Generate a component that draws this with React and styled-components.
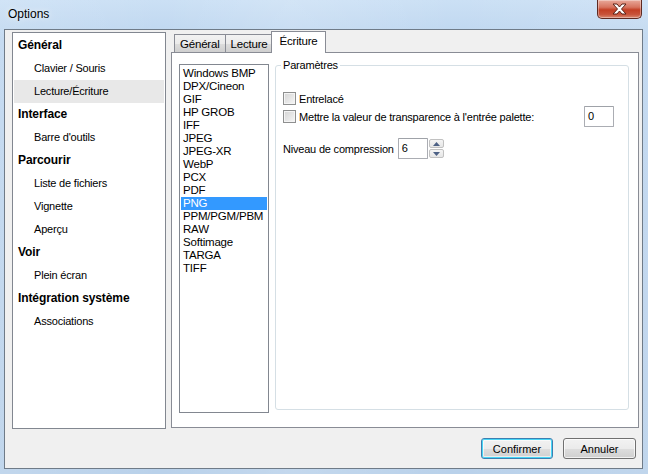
import React from 'react'
import styled, { createGlobalStyle } from 'styled-components'

const GlobalStyle = createGlobalStyle`
  html, body { margin: 0; padding: 0; }
  body {
    font-family: "Liberation Sans", Arial, sans-serif;
    font-size: 11px;
    letter-spacing: -0.2px;
    color: #000;
  }
  * { box-sizing: border-box; }
`

const treeItems = [
  { label: 'Général', header: true },
  { label: 'Clavier / Souris' },
  { label: 'Lecture/Écriture', selected: true },
  { label: 'Interface', header: true },
  { label: "Barre d'outils" },
  { label: 'Parcourir', header: true },
  { label: 'Liste de fichiers' },
  { label: 'Vignette' },
  { label: 'Aperçu' },
  { label: 'Voir', header: true },
  { label: 'Plein écran' },
  { label: 'Intégration système', header: true },
  { label: 'Associations' },
]

const formats = [
  'Windows BMP', 'DPX/Cineon', 'GIF', 'HP GROB', 'IFF', 'JPEG', 'JPEG-XR', 'WebP',
  'PCX', 'PDF', 'PNG', 'PPM/PGM/PBM', 'RAW', 'Softimage', 'TARGA', 'TIFF',
]

const tabs = ['Général', 'Lecture', 'Écriture']

const App = () => {
  return (
    <>
      <GlobalStyle />
      <Window>
        <TitleBar>
          <Title>Options</Title>
          <CloseButton>
            <svg width="17" height="12" viewBox="0 0 17 12">
              <path d="M2 1h4l2.5 3 2.5-3h4l-4.5 5 4.5 5h-4l-2.5-3-2.5 3H2l4.5-5z"
                fill="#fff" stroke="#5a2318" strokeWidth="1" strokeLinejoin="round" />
            </svg>
          </CloseButton>
        </TitleBar>
        <Client>
          <TopRow>
            <Tree>
              {treeItems.map((it) => (
                <TreeRow key={it.label} $header={it.header} $selected={it.selected}>
                  {it.label}
                </TreeRow>
              ))}
            </Tree>
            <TabColumn>
              <TabStrip>
                {tabs.map((t, i) => (
                  <Tab key={t} $active={i === 2}>{t}</Tab>
                ))}
              </TabStrip>
              <Pane>
                <FormatList>
                  {formats.map((f) => (
                    <FormatItem key={f} $selected={f === 'PNG'}>{f}</FormatItem>
                  ))}
                </FormatList>
                <Group>
                  <Legend>Paramètres</Legend>
                  <CheckRow>
                    <CheckBox />
                    <span>Entrelacé</span>
                  </CheckRow>
                  <CheckRow $tall>
                    <CheckBox />
                    <span>Mettre la valeur de transparence à l'entrée palette:</span>
                    <TextField>0</TextField>
                  </CheckRow>
                  <SpinRow>
                    <span>Niveau de compression</span>
                    <SpinField>6</SpinField>
                    <Spinner>
                      <SpinButton>
                        <svg width="7" height="4" viewBox="0 0 7 4"><path d="M0 4L3.5 0L7 4z" fill="#4d6185" /></svg>
                      </SpinButton>
                      <SpinButton>
                        <svg width="7" height="4" viewBox="0 0 7 4"><path d="M0 0L3.5 4L7 0z" fill="#4d6185" /></svg>
                      </SpinButton>
                    </Spinner>
                  </SpinRow>
                </Group>
              </Pane>
            </TabColumn>
          </TopRow>
          <Footer>
            <Button $default>Confirmer</Button>
            <Button>Annuler</Button>
          </Footer>
        </Client>
      </Window>
    </>
  )
}

const Window = styled.div`
  width: 648px;
  height: 474px;
  display: flex;
  flex-direction: column;
  background:
    linear-gradient(90deg, rgba(255,255,255,0.12) 0%, rgba(255,255,255,0) 25%, rgba(255,255,255,0.15) 45%, rgba(255,255,255,0) 70%, rgba(255,255,255,0.1) 100%),
    linear-gradient(180deg, #cbe0f5 0%, #bed6ef 8%, #b9d1ea 100%);
`

const TitleBar = styled.div`
  height: 29px;
  display: flex;
  justify-content: space-between;
  align-items: flex-start;
  padding: 0 6px 0 8px;
`

const Title = styled.div`
  font-size: 12px;
  letter-spacing: 0;
  line-height: 14px;
  padding-top: 7px;
  color: #000;
  text-shadow: 0 0 6px rgba(255,255,255,0.9);
`

const CloseButton = styled.div`
  width: 45px;
  height: 19px;
  display: flex;
  align-items: center;
  justify-content: center;
  border: 1px solid #5e2a22;
  border-top: none;
  border-radius: 0 0 5px 5px;
  background: linear-gradient(180deg, #e9a99a 0%, #d7745f 40%, #c33f24 55%, #c8533a 80%, #d98a72 100%);
  box-shadow: inset 0 0 0 1px rgba(255,255,255,0.35);
`

const Client = styled.div`
  flex: 1;
  margin: 0 5px 5px 4px;
  border: 1px solid #6f7b88;
  background: #f0f0f0;
  display: flex;
  flex-direction: column;
  padding: 2px 3px 0 7px;
`

const TopRow = styled.div`
  display: flex;
  gap: 5px;
  align-items: flex-start;
`

const Tree = styled.div`
  width: 154px;
  height: 397px;
  border: 1px solid #828790;
  background: #fff;
  padding-top: 1px;
`

const TreeRow = styled.div`
  height: 23px;
  line-height: 23px;
  margin: 0 1px;
  padding-left: ${(p) => (p.$header ? '4px' : '20px')};
  font-weight: ${(p) => (p.$header ? 'bold' : 'normal')};
  font-size: ${(p) => (p.$header ? '12px' : '11px')};
  letter-spacing: ${(p) => (p.$header ? '-0.1px' : '-0.2px')};
  background: ${(p) => (p.$selected ? '#e8e8e8' : 'transparent')};
  white-space: nowrap;
`

const TabColumn = styled.div`
  flex: 1;
  margin-top: -1px;
  display: flex;
  flex-direction: column;
`

const TabStrip = styled.div`
  height: 21px;
  display: flex;
  align-items: flex-end;
  padding-left: 3px;
`

const Tab = styled.div`
  height: ${(p) => (p.$active ? '22px' : '18px')};
  margin: ${(p) => (p.$active ? '0 -2px -1px -2px' : '0 0 0 -1px')};
  padding: ${(p) => (p.$active ? '2px 7px 0' : '2px 5px 0')};
  border: 1px solid #898c95;
  border-bottom: none;
  background: ${(p) => (p.$active ? '#fff' : 'linear-gradient(180deg, #f2f2f2 0%, #ebebeb 50%, #dddddd 51%, #cfcfcf 100%)')};
  font-size: 11.5px;
  line-height: 14px;
  position: relative;
  z-index: ${(p) => (p.$active ? 2 : 1)};
  &:first-child { margin-left: 0; }
`

const Pane = styled.div`
  height: 376px;
  border: 1px solid #898c95;
  background: #fff;
  display: flex;
  align-items: flex-start;
  gap: 6px;
  padding: 11px 9px 0 7px;
`

const FormatList = styled.div`
  width: 90px;
  height: 349px;
  border: 1px solid #828790;
  padding-top: 2px;
`

const FormatItem = styled.div`
  height: 13px;
  line-height: 13px;
  margin: 0 1px;
  padding-left: 2px;
  font-size: 11.5px;
  letter-spacing: -0.2px;
  white-space: nowrap;
  background: ${(p) => (p.$selected ? '#3399ff' : 'transparent')};
  color: ${(p) => (p.$selected ? '#fff' : '#000')};
`

const Group = styled.fieldset`
  flex: 1;
  margin: -5px 0 0 0;
  height: 351px;
  border: 1px solid #d5dfe5;
  border-radius: 3px;
  padding: 7px 14px 0 7px;
  display: flex;
  flex-direction: column;
`

const Legend = styled.legend`
  padding: 0 2px;
  margin-left: -2px;
  line-height: 13px;
`

const CheckRow = styled.div`
  display: flex;
  align-items: center;
  gap: 3px;
  height: ${(p) => (p.$tall ? '21px' : '13px')};
  margin-top: ${(p) => (p.$tall ? '1px' : '13px')};
  white-space: nowrap;
`

const CheckBox = styled.span`
  width: 13px;
  height: 13px;
  flex: none;
  border: 1px solid #8e8f8f;
  box-shadow: inset 0 0 0 1px #f4f4f4;
  background-image: linear-gradient(135deg, #d4d4d4 0%, #f6f6f6 100%);
`

const TextField = styled.div`
  width: 30px;
  height: 21px;
  flex: none;
  margin-left: auto;
  border: 1px solid #abadb3;
  border-top-color: #9fa2a8;
  border-radius: 1px;
  background: #fff;
  padding: 3px 0 0 3px;
  line-height: 13px;
`

const SpinField = styled(TextField)`
  margin-left: 4px;
`

const SpinRow = styled.div`
  display: flex;
  align-items: center;
  height: 21px;
  margin-top: 11px;
  white-space: nowrap;
`

const Spinner = styled.div`
  width: 15px;
  height: 19px;
  display: flex;
  flex-direction: column;
  gap: 1px;
  margin-left: 1px;
`

const SpinButton = styled.div`
  flex: 1;
  display: flex;
  align-items: center;
  justify-content: center;
  border: 1px solid #c1c1c1;
  border-radius: 2px;
  background: linear-gradient(180deg, #f5f5f5 0%, #e6e6e6 100%);
`

const Footer = styled.div`
  display: flex;
  justify-content: flex-end;
  gap: 10px;
  padding: 9px 3px 0 0;
`

const Button = styled.button`
  width: ${(p) => (p.$default ? '72px' : '73px')};
  height: 21px;
  font-family: "Liberation Sans", Arial, sans-serif;
  font-size: 11px;
  color: #000;
  padding: 0;
  border: 1px solid ${(p) => (p.$default ? '#3c7fb1' : '#707070')};
  border-radius: 3px;
  background: linear-gradient(180deg, #f2f2f2 0%, #ebebeb 50%, #dddddd 51%, #cfcfcf 100%);
  box-shadow: ${(p) => (p.$default ? 'inset 0 0 0 1px #48d6f6, inset 0 0 0 2px rgba(255,255,255,0.6)' : 'inset 0 0 0 1px rgba(255,255,255,0.7)')};
`

export default App
